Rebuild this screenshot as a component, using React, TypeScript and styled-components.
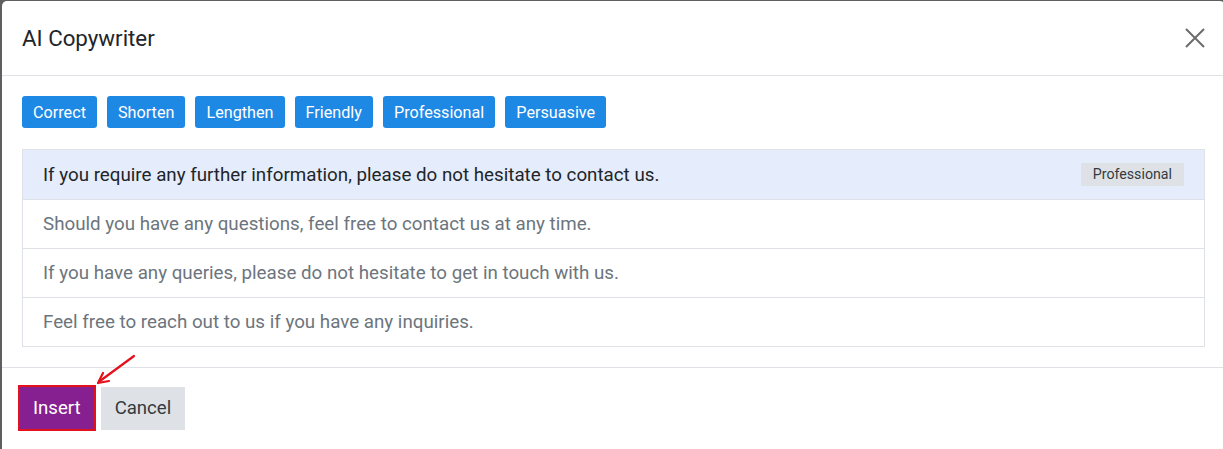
import React from "react";
import styled, { createGlobalStyle } from "styled-components";

const Global = createGlobalStyle`
  html, body { margin: 0; padding: 0; }
  body {
    background: #5f5f5f;
    font-family: Roboto, "Liberation Sans", Arial, sans-serif;
    overflow: hidden;
    width: 1223px;
    height: 449px;
  }
`;

const Modal = styled.div`
  position: relative;
  margin: 1px 0 0 2px;
  width: 1223px;
  height: 460px;
  background: #ffffff;
  border-radius: 5px 5px 0 0;
  box-sizing: border-box;
`;

const Header = styled.div`
  display: flex;
  align-items: center;
  justify-content: space-between;
  height: 74px;
  padding: 0 18px 0 20px;
  border-bottom: 1px solid #dee2e6;
  box-sizing: content-box;
`;

const Title = styled.h5`
  margin: 0;
  font-size: 22.3px;
  font-weight: 400;
  color: #212529;
`;

const Close = styled.button`
  border: 0;
  background: transparent;
  padding: 0;
  width: 24px;
  height: 24px;
  display: flex;
  align-items: center;
  justify-content: center;
  cursor: pointer;
`;

const Body = styled.div`
  padding: 20px 20px 20px 20px;
  display: flex;
  flex-direction: column;
  gap: 21px;
`;

const Toolbar = styled.div`
  display: flex;
  gap: 10px;
`;

const ToneButton = styled.button`
  height: 32px;
  padding: 0 11px;
  border: 0;
  border-radius: 3px;
  background: #1e88e5;
  color: #ffffff;
  font-family: inherit;
  font-size: 16.2px;
  cursor: pointer;
`;

const List = styled.div`
  display: flex;
  flex-direction: column;
  border: 1px solid #dee2e6;
`;

const Row = styled.div<{ $active?: boolean }>`
  display: flex;
  align-items: center;
  justify-content: space-between;
  height: ${(p) => (p.$active ? "49px" : "48px")};
  padding: 0 20px;
  font-size: 18.75px;
  color: ${(p) => (p.$active ? "#212529" : "#6c757d")};
  background: ${(p) => (p.$active ? "#e5edfc" : "#ffffff")};
  & + & {
    border-top: 1px solid #dee2e6;
  }
`;

const Badge = styled.span`
  background: #dee2e6;
  color: #343a40;
  font-size: 14.2px;
  line-height: 17px;
  padding: 3px 12px;
  border-radius: 1px;
`;

const Footer = styled.div`
  border-top: 1px solid #dee2e6;
  padding: 17px 16px;
  display: flex;
  align-items: center;
  gap: 5px;
`;

const Insert = styled.button`
  height: 46px;
  padding: 0 13px;
  background: #861f90;
  color: #ffffff;
  border: 2px solid #e3111b;
  font-family: inherit;
  font-size: 18.6px;
  cursor: pointer;
`;

const Cancel = styled.button`
  height: 43px;
  padding: 0 14px;
  background: #dee2e6;
  color: #343a40;
  border: 0;
  font-family: inherit;
  font-size: 18.6px;
  cursor: pointer;
`;

const Arrow = styled.svg`
  position: absolute;
  left: 92px;
  top: 352px;
  pointer-events: none;
`;

const tones = ["Correct", "Shorten", "Lengthen", "Friendly", "Professional", "Persuasive"];

const suggestions = [
  "If you require any further information, please do not hesitate to contact us.",
  "Should you have any questions, feel free to contact us at any time.",
  "If you have any queries, please do not hesitate to get in touch with us.",
  "Feel free to reach out to us if you have any inquiries.",
];

export default function App() {
  return (
    <>
      <Global />
      <Modal>
        <Header>
          <Title>AI Copywriter</Title>
          <Close aria-label="Close">
            <svg width="20" height="20" viewBox="0 0 20 20">
              <path d="M1 1 L19 19 M19 1 L1 19" stroke="#6c6c6c" strokeWidth="2" fill="none" />
            </svg>
          </Close>
        </Header>
        <Body>
          <Toolbar>
            {tones.map((t) => (
              <ToneButton key={t}>{t}</ToneButton>
            ))}
          </Toolbar>
          <List>
            {suggestions.map((s, i) => (
              <Row key={s} $active={i === 0}>
                <span>{s}</span>
                {i === 0 && <Badge>Professional</Badge>}
              </Row>
            ))}
          </List>
        </Body>
        <Footer>
          <Insert>Insert</Insert>
          <Cancel>Cancel</Cancel>
        </Footer>
        <Arrow width="46" height="34" viewBox="0 0 46 34">
          <path d="M40 3 L6 28" stroke="#e3111b" strokeWidth="2.2" fill="none" strokeLinecap="round" />
          <path d="M4 30 L9 20 M4 30 L15 28" stroke="#e3111b" strokeWidth="2.2" fill="none" strokeLinecap="round" />
        </Arrow>
      </Modal>
    </>
  );
}
